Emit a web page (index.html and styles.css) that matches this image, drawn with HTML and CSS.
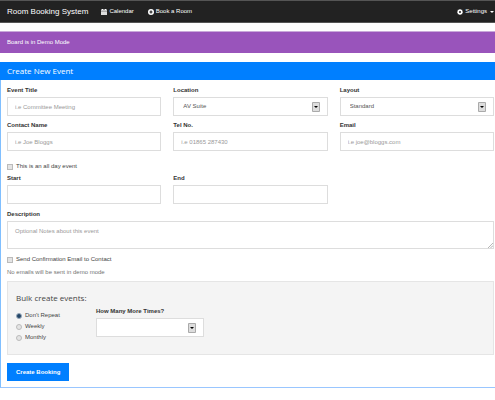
FILE: index.html
```html
<!DOCTYPE html>
<html lang="en">
<head>
<meta charset="utf-8">
<title>Room Booking System</title>
<link rel="stylesheet" href="styles.css">
</head>
<body>
<nav class="navbar">
  <a class="brand" href="#">Room Booking System</a>
  <a class="nav-link" href="#"><svg class="icon" viewBox="0 0 12 12"><path fill="#fff" d="M0 1h2V0h2v1h4V0h2v1h2v2.500H0z"/><path fill="#ddd" d="M0 4.500h12V12H0z"/></svg>Calendar</a>
  <a class="nav-link nav-book" href="#"><svg class="icon" viewBox="0 0 12 12"><circle cx="6" cy="6" r="6" fill="#fff"/><path fill="#222" d="M4.800 3h2.400v1.800H9v2.400H7.200V9H4.800V7.200H3V4.800h1.800z"/></svg>Book a Room</a>
  <a class="nav-link nav-settings" href="#"><svg class="icon" viewBox="0 0 12 12"><path fill="#fff" fill-rule="evenodd" d="M5 0h2l.3 1.700 1 .4L9.700 1.100l1.300 1.300-1 1.400.4 1L12 5v2l-1.600.3-.4 1 1 1.400L9.700 11l-1.400-1-1 .4L7 12H5l-.3-1.600-1-.4-1.400 1L1 9.700l1-1.400-.4-1L0 7V5l1.600-.2.4-1-1-1.400 1.300-1.300 1.400 1 1-.4zM6 4a2 2 0 1 0 0 4 2 2 0 0 0 0-4z"/></svg>Settings<span class="caret"></span></a>
</nav>
<div class="alert">Board is in Demo Mode</div>
<main class="panel">
  <h1 class="panel-title">Create New Event</h1>
  <form class="form">
    <div class="grid">
      <div class="field"><label for="title">Event Title</label><input class="control" id="title" type="text" placeholder="i.e Committee Meeting"></div>
      <div class="field"><label for="location">Location</label><select class="control" id="location"><option>AV Suite</option></select></div>
      <div class="field"><label for="layout">Layout</label><select class="control" id="layout"><option>Standard</option></select></div>
      <div class="field"><label for="contact">Contact Name</label><input class="control" id="contact" type="text" placeholder="i.e Joe Bloggs"></div>
      <div class="field"><label for="tel">Tel No.</label><input class="control" id="tel" type="tel" placeholder="i.e 01865 287430"></div>
      <div class="field"><label for="email">Email</label><input class="control" id="email" type="email" placeholder="i.e joe@bloggs.com"></div>
    </div>
    <label class="check all-day"><input type="checkbox">This is an all day event</label>
    <div class="grid">
      <div class="field"><label for="start">Start</label><input class="control" id="start" type="text"></div>
      <div class="field"><label for="end">End</label><input class="control" id="end" type="text"></div>
    </div>
    <div class="field description"><label for="description">Description</label><textarea class="control" id="description" placeholder="Optional Notes about this event"></textarea></div>
    <label class="check confirm"><input type="checkbox">Send Confirmation Email to Contact</label>
    <p class="help">No emails will be sent in demo mode</p>
    <section class="well">
      <h2 class="well-title">Bulk create events:</h2>
      <div class="bulk">
        <div class="repeat">
          <label class="check"><input type="radio" name="repeat" checked>Don't Repeat</label>
          <label class="check"><input type="radio" name="repeat">Weekly</label>
          <label class="check"><input type="radio" name="repeat">Monthly</label>
        </div>
        <div class="field times"><label for="times">How Many More Times?</label><select class="control" id="times"><option></option></select></div>
      </div>
    </section>
    <button class="submit" type="submit">Create Booking</button>
  </form>
</main>
</body>
</html>
```
FILE: styles.css
```css
* { box-sizing: border-box; }

body {
  margin: 0;
  background: #fff;
  color: #444;
  font: 6px/11px "Liberation Sans", Arial, sans-serif;
}

.navbar {
  display: flex;
  align-items: center;
  height: 23px;
  padding: 0 1px 0 7px;
  border-top: 1px solid #555;
  border-bottom: 1px solid #555;
  background: #222;
}

.navbar a { color: #fff; text-decoration: none; }
.brand { font-size: 8px; margin-right: 13px; }
.nav-link { display: flex; align-items: center; gap: 2px; }
.nav-book { margin-left: 14px; }
.nav-settings { margin-left: auto; }
.icon { width: 6px; height: 6px; }

.caret {
  margin-left: 1px;
  border: 2px solid transparent;
  border-top-color: #fff;
  border-bottom: 0;
}

.alert {
  margin: 8px 0 9px;
  padding: 5px 7px;
  border-top: 1px solid #c9a9da;
  background: #9954bb;
  color: #fff;
}

.panel {
  border-left: 1px solid #80bfff;
  border-bottom: 1px solid #99c6ff;
}

.panel-title {
  margin: 0 0 0 -1px;
  padding: 0 7px;
  background: #007fff;
  color: #fff;
  font: 8px/18px "Open Sans", sans-serif;
}

.form { padding: 4px 1px 6px 6px; }

.grid {
  display: grid;
  grid-template-columns: repeat(3, 1fr);
  column-gap: 12px;
  row-gap: 3px;
}

.field label {
  display: block;
  color: #333;
  font-weight: bold;
  line-height: 13px;
}

.control {
  display: block;
  width: 100%;
  height: 19px;
  margin: 0;
  padding: 0 7px;
  border: 1px solid #ddd;
  border-radius: 0;
  background-color: #fff;
  color: #555;
  font: inherit;
}

.control::placeholder { color: #999; opacity: 1; }

select.control {
  appearance: none;
  padding-left: 9px;
  background: url("data:image/svg+xml,%3Csvg xmlns='http://www.w3.org/2000/svg' width='8' height='10'%3E%3Cpath fill='%23ddd' stroke='%23aaa' d='M.5.5h7v9h-7z'/%3E%3Cpath d='M2 4h4L4 6z'/%3E%3C/svg%3E") no-repeat right 7px center #fff;
}

textarea.control { height: 28px; padding: 4px 7px; resize: vertical; }

textarea.control::-webkit-resizer {
  background: url("data:image/svg+xml,%3Csvg xmlns='http://www.w3.org/2000/svg' width='5' height='5'%3E%3Cpath stroke='%23999' stroke-dasharray='1 .5' d='M0 5l5-5M2.500 5L5 2.500'/%3E%3C/svg%3E") no-repeat right bottom;
}

.check { display: flex; align-items: center; gap: 3px; height: 11px; }

.check input {
  appearance: none;
  width: 6px;
  height: 6px;
  margin: 0;
  border: 1px solid #bbb;
  background: #e4e4e4;
}

.check input[type="radio"] { border-radius: 50%; }
.check input[type="radio"]:checked { border-color: #9ab; background: #246; }

.all-day { margin: 10px 0 0; }
.description { margin-top: 4px; }
.confirm { margin-top: 5px; }
.help { margin: 2px 0 3px; color: #737373; }

.well {
  padding: 9px 8px 11px;
  border: 1px solid #e5e5e5;
  background: #f4f4f4;
}

.well-title {
  margin: 0;
  font: 8px/14px "Open Sans", sans-serif;
}

.bulk { display: flex; }
.repeat { flex: 0 0 80px; padding-top: 5px; }
.times { flex: 0 0 108px; }

.submit {
  display: block;
  margin-top: 8px;
  padding: 4px 9px;
  border: 0;
  background: #007fff;
  color: #fff;
  font: bold 6px/10px "Liberation Sans", Arial, sans-serif;
}
```
